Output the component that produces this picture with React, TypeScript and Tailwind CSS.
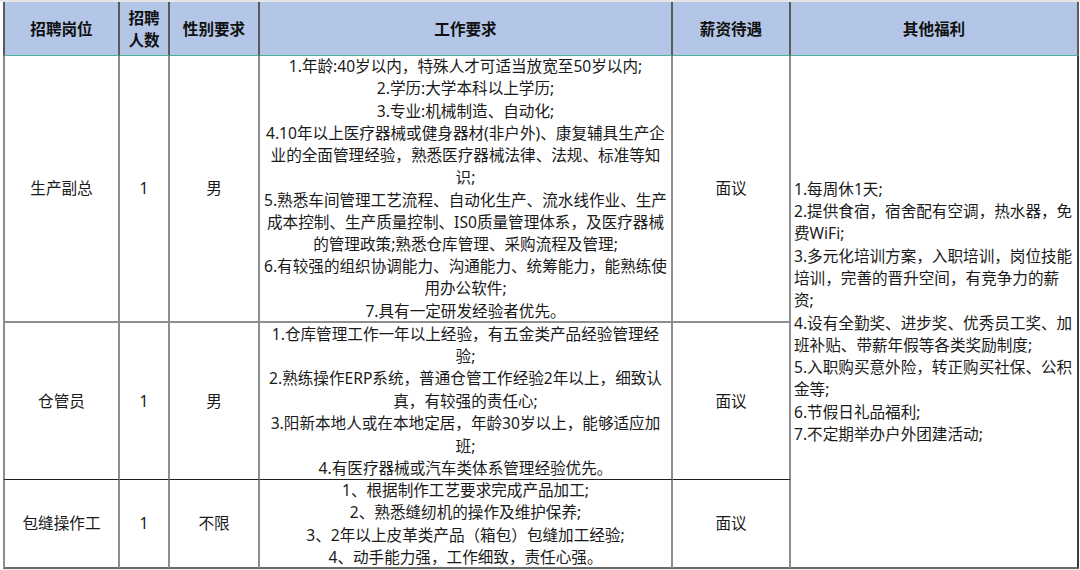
import React from "react";

const font = { fontFamily: '"Noto Sans", "Noto Sans CJK SC", sans-serif' };

const row1 = [
  "1.年龄:40岁以内，特殊人才可适当放宽至50岁以内;",
  "2.学历:大学本科以上学历;",
  "3.专业:机械制造、自动化;",
  "4.10年以上医疗器械或健身器材(非户外)、康复辅具生产企",
  "业的全面管理经验，熟悉医疗器械法律、法规、标准等知",
  "识;",
  "5.熟悉车间管理工艺流程、自动化生产、流水线作业、生产",
  "成本控制、生产质量控制、IS0质量管理体系，及医疗器械",
  "的管理政策;熟悉仓库管理、采购流程及管理;",
  "6.有较强的组织协调能力、沟通能力、统筹能力，能熟练使",
  "用办公软件;",
  "7.具有一定研发经验者优先。",
];

const row2 = [
  "1.仓库管理工作一年以上经验，有五金类产品经验管理经",
  "验;",
  "2.熟练操作ERP系统，普通仓管工作经验2年以上，细致认",
  "真，有较强的责任心;",
  "3.阳新本地人或在本地定居，年龄30岁以上，能够适应加",
  "班;",
  "4.有医疗器械或汽车类体系管理经验优先。",
];

const row3 = [
  "1、根据制作工艺要求完成产品加工;",
  "2、熟悉缝纫机的操作及维护保养;",
  "3、2年以上皮革类产品（箱包）包缝加工经验;",
  "4、动手能力强，工作细致，责任心强。",
];

const benefits = [
  "1.每周休1天;",
  "2.提供食宿，宿舍配有空调，热水器，免",
  "费WiFi;",
  "3.多元化培训方案，入职培训，岗位技能",
  "培训，完善的晋升空间，有竞争力的薪",
  "资;",
  "4.设有全勤奖、进步奖、优秀员工奖、加",
  "班补贴、带薪年假等各类奖励制度;",
  "5.入职购买意外险，转正购买社保、公积",
  "金等;",
  "6.节假日礼品福利;",
  "7.不定期举办户外团建活动;",
];

function Lines({ lines }: { lines: string[] }) {
  return (
    <>
      {lines.map((l, i) => (
        <div key={i} className="whitespace-nowrap">
          {l}
        </div>
      ))}
    </>
  );
}

const hd =
  "bg-[#b4c6e7] border-b border-b-[#52b394] border-r-2 border-r-[#5a5a5a] flex items-center justify-center font-bold text-[#111] leading-[22px]";
const cell =
  "border-r-2 border-r-[#8e8e8e] flex flex-col items-center justify-center text-[#1a1a1a] leading-[22.2px]";

export default function App() {
  return (
    <div
      className="w-[1080px] h-[570px] bg-white border-t-2 border-t-[#e6e6e6] pl-[3px] overflow-hidden text-[15.6px]"
      style={font}
    >
      <div className="grid grid-cols-[117px_50px_90px_413px_118px_288px] grid-rows-[54px_267px_157px_89px]">
        {/* header */}
        <div className={`${hd} border-l-2 border-l-[#5a5a5a]`}>招聘岗位</div>
        <div className={`${hd} flex-col`}>
          <div>招聘</div>
          <div>人数</div>
        </div>
        <div className={hd}>性别要求</div>
        <div className={hd}>工作要求</div>
        <div className={`${hd} border-r-[#3a3a3a]`}>薪资待遇</div>
        <div className={`${hd} border-r-[#3a3a3a]`}>其他福利</div>

        {/* row 1 */}
        <div className={`${cell} border-l-2 border-l-[#8e8e8e] border-b-2 border-b-[#8e8e8e]`}>生产副总</div>
        <div className={`${cell} border-b-2 border-b-[#8e8e8e]`}>1</div>
        <div className={`${cell} border-b-2 border-b-[#8e8e8e]`}>男</div>
        <div className={`${cell} border-b-2 border-b-[#8e8e8e]`}>
          <Lines lines={row1} />
        </div>
        <div className={`${cell} border-b-2 border-b-[#8e8e8e] border-r-[#3a3a3a]`}>面议</div>

        {/* benefits spanning rows */}
        <div className="row-span-3 border-r-2 border-r-[#3a3a3a] border-b-2 border-b-[#6a6a6a] flex flex-col justify-center pl-[3px] text-[#1a1a1a] leading-[22.3px]">
          <Lines lines={benefits} />
        </div>

        {/* row 2 */}
        <div className={`${cell} border-l-2 border-l-[#8e8e8e] border-b border-b-[#1e1e1e]`}>仓管员</div>
        <div className={`${cell} border-b border-b-[#1e1e1e]`}>1</div>
        <div className={`${cell} border-b border-b-[#1e1e1e]`}>男</div>
        <div className={`${cell} border-b border-b-[#1e1e1e] leading-[22.4px]`}>
          <Lines lines={row2} />
        </div>
        <div className={`${cell} border-b border-b-[#1e1e1e] border-r-[#3a3a3a]`}>面议</div>

        {/* row 3 */}
        <div className={`${cell} border-l-2 border-l-[#8e8e8e] border-b-2 border-b-[#6a6a6a]`}>包缝操作工</div>
        <div className={`${cell} border-b-2 border-b-[#6a6a6a]`}>1</div>
        <div className={`${cell} border-b-2 border-b-[#6a6a6a]`}>不限</div>
        <div className={`${cell} border-b-2 border-b-[#6a6a6a] leading-[21.6px]`}>
          <Lines lines={row3} />
        </div>
        <div className={`${cell} border-b-2 border-b-[#6a6a6a] border-r-[#3a3a3a]`}>面议</div>
      </div>
      <div className="h-[2px] bg-[#ececec]" />
    </div>
  );
}
